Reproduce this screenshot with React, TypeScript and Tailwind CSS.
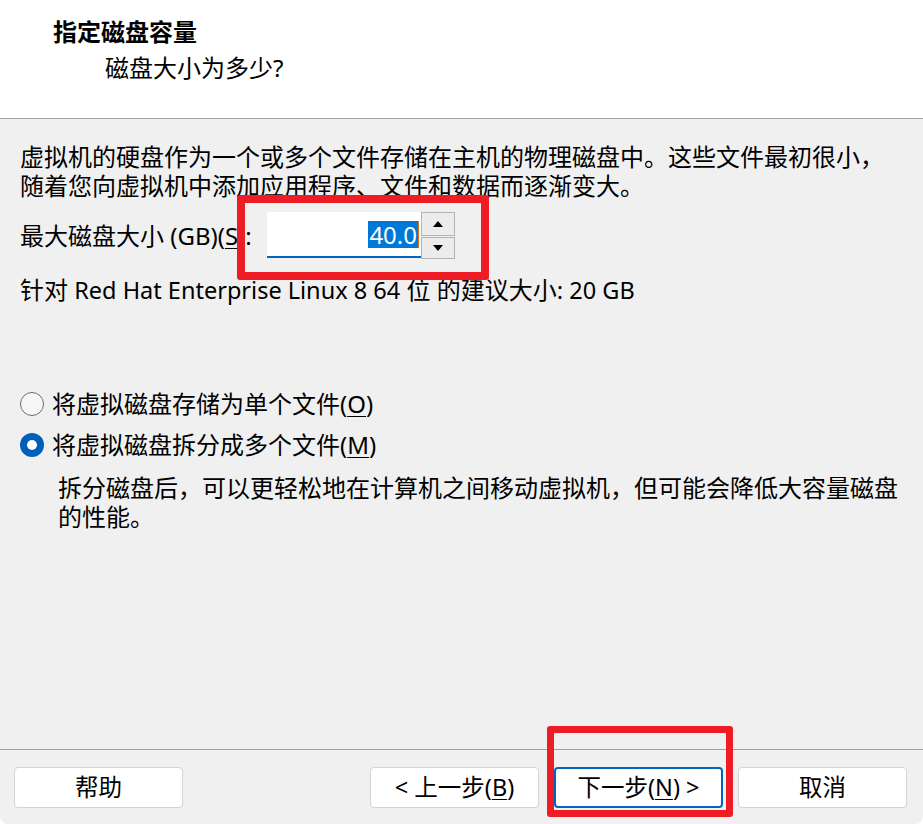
import React from "react";

const font = { fontFamily: '"Noto Sans", "Noto Sans CJK SC", sans-serif' };

function Key({ k }: { k: string }) {
  return <span className="underline underline-offset-[3px] decoration-1">{k}</span>;
}

function Radio({ checked, children }: { checked?: boolean; children: React.ReactNode }) {
  return (
    <div className="flex items-center h-[29px]">
      {checked ? (
        <span className="flex h-[24px] w-[24px] items-center justify-center rounded-full bg-[#005fb8]">
          <span className="h-[10px] w-[10px] rounded-full bg-white" />
        </span>
      ) : (
        <span className="h-[24px] w-[24px] rounded-full border-[1.5px] border-[#6b6b6b] bg-[#f7f7f7]" />
      )}
      <span className="ml-[8px]">{children}</span>
    </div>
  );
}

function Btn({ children, primary }: { children: React.ReactNode; primary?: boolean }) {
  return (
    <button
      className={
        "flex h-[41px] w-[169px] items-center justify-center rounded-[4px] bg-white text-[23.5px] text-black " +
        (primary ? "border-2 border-[#0067c0]" : "border border-[#d3d3d3]")
      }
    >
      {children}
    </button>
  );
}

export default function App() {
  return (
    <div className="relative flex h-[824px] w-[923px] flex-col overflow-hidden rounded-b-[8px] bg-[#f0f0f0] text-black" style={font}>
      {/* header */}
      <div className="h-[119px] shrink-0 border-b border-[#a0a0a0] bg-white pt-[17px]">
        <div className="pl-[53px] text-[24px] font-bold leading-[29px]">指定磁盘容量</div>
        <div className="mt-[7px] pl-[105px] text-[24px] leading-[29px]">磁盘大小为多少?</div>
      </div>

      {/* body */}
      <div className="flex-1 px-[20px] pt-[23px] text-[24px] leading-[29px]">
        <p>
          虚拟机的硬盘作为一个或多个文件存储在主机的物理磁盘中。这些文件最初很小，
          <br />
          随着您向虚拟机中添加应用程序、文件和数据而逐渐变大。
        </p>

        <div className="mt-[12px] flex items-center">
          <span className="w-[247px]">
            最大磁盘大小 (GB)(<Key k="S" />):
          </span>
          <div className="flex">
            <div className="flex h-[46px] w-[154px] items-center justify-end border-b-2 border-[#0067c0] bg-white pr-[2px]">
              <span className="bg-[#0078d7] px-[1px] leading-[27px] text-white">40.0</span>
              <span className="h-[27px] w-[1px] bg-[#e07020]" />
            </div>
            <div className="flex w-[34px] flex-col">
              <div className="flex h-[24px] items-center justify-center border border-[#b4b4b4] bg-[#ececec]">
                <svg width="10" height="6" viewBox="0 0 10 6"><path d="M5 0 L10 6 L0 6 Z" fill="#000" /></svg>
              </div>
              <div className="mt-[1px] flex h-[22px] items-center justify-center border border-[#b4b4b4] bg-[#ececec]">
                <svg width="10" height="6" viewBox="0 0 10 6"><path d="M0 0 L10 0 L5 6 Z" fill="#000" /></svg>
              </div>
            </div>
          </div>
        </div>

        <p className="mt-[16px]">
          针对 <span className="text-[23.5px]">Red Hat Enterprise Linux 8 64</span> 位 的建议大小: <span className="text-[23.5px]">20 GB</span>
        </p>

        <div className="mt-[84px]">
          <Radio>
            将虚拟磁盘存储为单个文件(<Key k="O" />)
          </Radio>
        </div>
        <div className="mt-[12px]">
          <Radio checked>
            将虚拟磁盘拆分成多个文件(<Key k="M" />)
          </Radio>
        </div>
        <p className="mt-[14px] pl-[38px]">
          拆分磁盘后，可以更轻松地在计算机之间移动虚拟机，但可能会降低大容量磁盘
          <br />
          的性能。
        </p>
      </div>

      {/* footer */}
      <div className="flex shrink-0 items-center border-t border-[#a0a0a0] pb-[16px] pl-[14px] pr-[16px] pt-[17px]">
        <Btn>帮助</Btn>
        <div className="ml-auto flex gap-[15px]">
          <Btn>
            &lt; 上一步(<Key k="B" />)
          </Btn>
          <Btn primary>
            下一步(<Key k="N" />) &gt;
          </Btn>
          <Btn>取消</Btn>
        </div>
      </div>

      {/* annotation boxes */}
      <div className="absolute left-[237px] top-[195px] h-[85px] w-[252px] rounded-[3px] border-[8px] border-[#ee1c25]" />
      <div className="absolute left-[547px] top-[726px] h-[91px] w-[186px] rounded-[3px] border-[7px] border-[#ee1c25]" />
    </div>
  );
}
